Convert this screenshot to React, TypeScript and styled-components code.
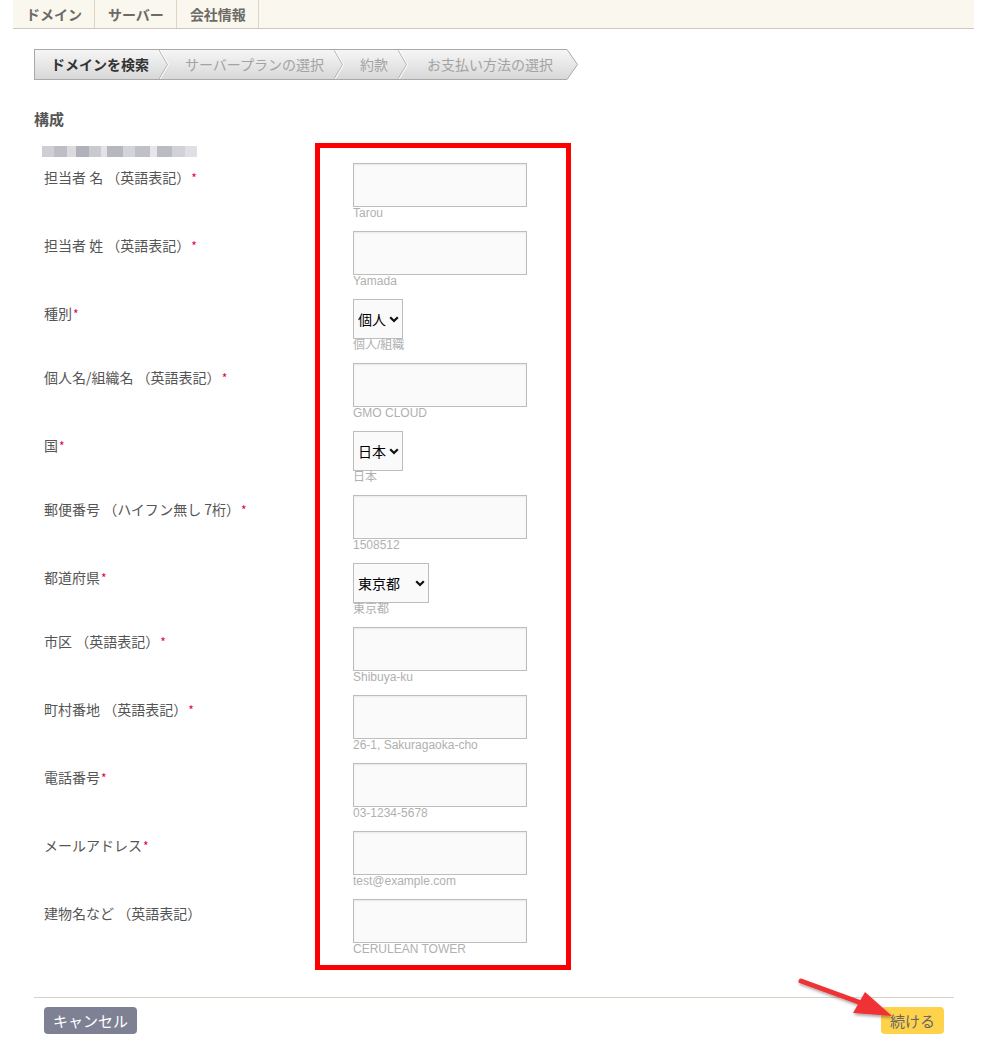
import React from "react";
import styled, { createGlobalStyle } from "styled-components";

const GlobalStyle = createGlobalStyle`
  html, body { margin: 0; padding: 0; background: #fff; }
  body {
    font-family: "Noto Sans CJK JP", "Liberation Sans", sans-serif;
    color: #555;
  }
  * { box-sizing: border-box; }
`;

const Page = styled.div`
  width: 961px;
  margin-left: 13px;
`;

const Nav = styled.nav`
  display: flex;
  height: 29px;
  background: #faf7ee;
  border-bottom: 1px solid #cfc8bb;
`;

const NavItem = styled.a`
  display: flex;
  align-items: center;
  padding: 0 12px 0 13px;
  font-size: 14px;
  font-weight: 700;
  line-height: 28px;
  color: #6d6a66;
  text-decoration: none;
  border-right: 1px solid #ddd5c5;
`;

const Main = styled.main`
  padding: 20px 20px 0 21px;
`;

const Steps = styled.div`
  display: flex;
  height: 31px;
`;

const StepBar = styled.ol`
  display: flex;
  margin: 0;
  padding: 0;
  list-style: none;
  background: linear-gradient(#f6f6f6, #d8d8d8);
  border: 1px solid #a9a9a9;
  border-right: none;
`;

const Step = styled.li<{ $active?: boolean }>`
  display: flex;
  align-items: center;
  padding: 0 10px 0 16px;
  font-size: 14px;
  line-height: 29px;
  font-weight: ${(p) => (p.$active ? 700 : 400)};
  color: ${(p) => (p.$active ? "#333" : "#a3a3a3")};
  white-space: nowrap;
  &:last-of-type {
    padding: 0 14px 0 19px;
  }
`;

const SepSvg = styled.svg`
  flex: none;
  display: block;
`;

const Separator = () => (
  <SepSvg width="10" height="29" viewBox="0 0 10 29">
    <polyline points="0,0 8.5,14.5 0,29" fill="none" stroke="#b3b3b3" strokeWidth="1" />
    <polyline points="1.2,0 9.7,14.5 1.2,29" fill="none" stroke="#fdfdfd" strokeWidth="1" />
  </SepSvg>
);

const Tip = () => (
  <SepSvg width="12" height="31" viewBox="0 0 12 31">
    <defs>
      <linearGradient id="tipg" x1="0" y1="0" x2="0" y2="1">
        <stop offset="0" stopColor="#f6f6f6" />
        <stop offset="1" stopColor="#d8d8d8" />
      </linearGradient>
    </defs>
    <polygon points="0,0.5 10.5,15.5 0,30.5" fill="url(#tipg)" />
    <polyline points="0,0.5 10.5,15.5 0,30.5" fill="none" stroke="#a9a9a9" strokeWidth="1" />
  </SepSvg>
);

const SectionTitle = styled.h2`
  margin: 29px 0 14px;
  font-size: 15px;
  font-weight: 700;
  line-height: 20px;
  color: #555;
`;

const Form = styled.div`
  display: flex;
  align-items: flex-start;
  padding-left: 10px;
`;

const LabelColumn = styled.div`
  width: 271px;
  padding-top: 3px;
`;

const Blurred = styled.div`
  width: 155px;
  height: 11px;
  margin-left: -2px;
  margin-bottom: 6px;
  background: linear-gradient(
    90deg,
    #c9c9d0 0 8%,
    #b8b8c2 8% 16%,
    #d6d6dc 16% 22%,
    #a9a9b4 22% 30%,
    #c4c4cc 30% 38%,
    #e0e0e4 38% 42%,
    #b0b0ba 42% 52%,
    #cfcfd6 52% 60%,
    #babac3 60% 70%,
    #e4e4e8 70% 74%,
    #b4b4be 74% 84%,
    #cdcdd4 84% 92%,
    #dcdce2 92% 100%
  );
  filter: blur(0.6px);
  opacity: 0.9;
`;

const LabelRow = styled.div<{ $h: number }>`
  height: ${(p) => p.$h}px;
  padding-top: 4px;
  font-size: 14px;
  line-height: 20px;
  color: #555;
  white-space: nowrap;
`;

const Req = styled.span`
  color: #e5004f;
  font-size: 12px;
  margin-left: 1px;
`;

const Highlight = styled.div`
  width: 256px;
  border: 5px solid #ff0000;
  padding: 15px 0 0 33px;
`;

const FieldRow = styled.div`
  display: flex;
  flex-direction: column;
  align-items: flex-start;
  margin-bottom: 10px;
  &:last-child {
    margin-bottom: 8px;
  }
`;

const TextInput = styled.input`
  width: 174px;
  height: 44px;
  margin: 0;
  padding: 4px 6px;
  border: 1px solid #bdbdbd;
  border-radius: 0;
  background: #fafafa;
  box-shadow: inset 0 1px 2px rgba(0, 0, 0, 0.07);
  font-size: 14px;
  font-family: "Liberation Sans", "Noto Sans CJK JP", sans-serif;
  outline: none;
`;

const chevron =
  "url(\"data:image/svg+xml;utf8,<svg xmlns='http://www.w3.org/2000/svg' width='10' height='7' viewBox='0 0 10 7'><polyline points='1.2,1.2 5,5 8.8,1.2' fill='none' stroke='%23111' stroke-width='2.2'/></svg>\")";

const Select = styled.select<{ $w: number }>`
  appearance: none;
  -webkit-appearance: none;
  width: ${(p) => p.$w}px;
  height: 40px;
  margin: 0;
  padding: 0 0 0 4px;
  border: 1px solid #bdbdbd;
  border-radius: 0;
  background: #fafafa ${chevron} no-repeat right 3px center;
  color: #000;
  font-size: 14px;
  font-weight: 400;
  font-family: "Noto Sans CJK JP", "Liberation Sans", sans-serif;
  outline: none;
`;

const Hint = styled.span`
  font-family: "Liberation Sans", "Noto Sans CJK JP", sans-serif;
  font-size: 12px;
  line-height: 13px;
  margin-bottom: 1px;
  color: #b0b0b0;
  white-space: nowrap;
`;

const Footer = styled.div`
  position: relative;
  display: flex;
  justify-content: space-between;
  align-items: flex-start;
  margin-top: 27px;
  padding: 9px 10px 16px;
  border-top: 1px solid #d9d2c3;
`;

const Button = styled.button<{ $variant: "cancel" | "go" }>`
  height: 27px;
  padding: 0 9px;
  border: none;
  border-radius: 4px;
  font-family: "Noto Sans CJK JP", sans-serif;
  font-size: 15px;
  line-height: 27px;
  cursor: pointer;
  background: ${(p) => (p.$variant === "cancel" ? "#7e8194" : "#ffd24c")};
  color: ${(p) => (p.$variant === "cancel" ? "#fff" : "#666")};
`;

const ArrowSvg = styled.svg`
  position: absolute;
  left: 760px;
  top: -24px;
  overflow: visible;
  pointer-events: none;
`;

type Field =
  | { label: string; required: boolean; kind: "input"; hint: string }
  | { label: string; required: boolean; kind: "select"; hint: string; value: string; width: number };

const fields: Field[] = [
  { label: "担当者 名 （英語表記）", required: true, kind: "input", hint: "Tarou" },
  { label: "担当者 姓 （英語表記）", required: true, kind: "input", hint: "Yamada" },
  { label: "種別", required: true, kind: "select", hint: "個人/組織", value: "個人", width: 50 },
  { label: "個人名/組織名 （英語表記）", required: true, kind: "input", hint: "GMO CLOUD" },
  { label: "国", required: true, kind: "select", hint: "日本", value: "日本", width: 50 },
  { label: "郵便番号 （ハイフン無し 7桁）", required: true, kind: "input", hint: "1508512" },
  { label: "都道府県", required: true, kind: "select", hint: "東京都", value: "東京都", width: 76 },
  { label: "市区 （英語表記）", required: true, kind: "input", hint: "Shibuya-ku" },
  { label: "町村番地 （英語表記）", required: true, kind: "input", hint: "26-1, Sakuragaoka-cho" },
  { label: "電話番号", required: true, kind: "input", hint: "03-1234-5678" },
  { label: "メールアドレス", required: true, kind: "input", hint: "test@example.com" },
  { label: "建物名など （英語表記）", required: false, kind: "input", hint: "CERULEAN TOWER" },
];

const steps = ["ドメインを検索", "サーバープランの選択", "約款", "お支払い方法の選択"];

export default function App() {
  return (
    <>
      <GlobalStyle />
      <Page>
        <Nav>
          <NavItem>ドメイン</NavItem>
          <NavItem>サーバー</NavItem>
          <NavItem>会社情報</NavItem>
        </Nav>
        <Main>
          <Steps>
            <StepBar>
              {steps.map((s, i) => (
                <React.Fragment key={s}>
                  <Step $active={i === 0}>{s}</Step>
                  {i < steps.length - 1 && <Separator />}
                </React.Fragment>
              ))}
            </StepBar>
            <Tip />
          </Steps>
          <SectionTitle>構成</SectionTitle>
          <Form>
            <LabelColumn>
              <Blurred />
              {fields.map((f, i) => (
                <LabelRow
                  key={f.label}
                  $h={i === fields.length - 1 ? 66 : f.kind === "input" ? 68 : 64}
                >
                  {f.label}
                  {f.required && <Req>*</Req>}
                </LabelRow>
              ))}
            </LabelColumn>
            <Highlight>
              {fields.map((f) => (
                <FieldRow key={f.label}>
                  {f.kind === "input" ? (
                    <TextInput type="text" />
                  ) : (
                    <Select $w={f.width} defaultValue={f.value}>
                      <option value={f.value}>{f.value}</option>
                    </Select>
                  )}
                  <Hint>{f.hint}</Hint>
                </FieldRow>
              ))}
            </Highlight>
          </Form>
          <Footer>
            <Button $variant="cancel">キャンセル</Button>
            <Button $variant="go">続ける</Button>
            <ArrowSvg width="110" height="50" viewBox="0 0 110 50">
              <defs>
                <filter id="ash" x="-20%" y="-20%" width="140%" height="160%">
                  <feDropShadow dx="1" dy="2" stdDeviation="1.5" floodColor="#000" floodOpacity="0.35" />
                </filter>
              </defs>
              <g filter="url(#ash)">
                <line x1="7" y1="7" x2="70" y2="30" stroke="#f03236" strokeWidth="5" strokeLinecap="round" />
                <polygon points="71,18 59,39 98,42" fill="#f03236" />
              </g>
            </ArrowSvg>
          </Footer>
        </Main>
      </Page>
    </>
  );
}
